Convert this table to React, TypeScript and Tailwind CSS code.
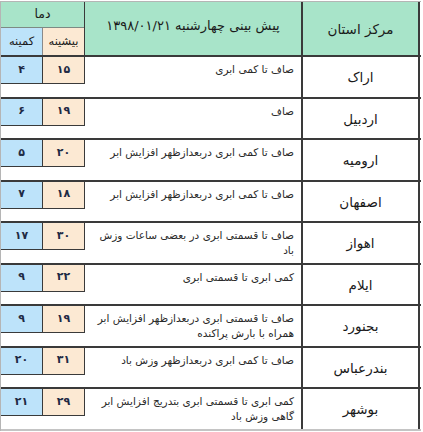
import React from "react";

type Row = { city: string; max: string; min: string; text: string };

const rows: Row[] = [
  { city: "اراک", max: "۱۵", min: "۴", text: "صاف تا کمی ابری" },
  { city: "اردبیل", max: "۱۹", min: "۶", text: "صاف" },
  { city: "ارومیه", max: "۲۰", min: "۵", text: "صاف تا کمی ابری دربعدازظهر افزایش ابر" },
  { city: "اصفهان", max: "۱۸", min: "۷", text: "صاف تا کمی ابری دربعدازظهر افزایش ابر" },
  { city: "اهواز", max: "۳۰", min: "۱۷", text: "صاف تا قسمتی ابری در بعضی ساعات وزش باد" },
  { city: "ایلام", max: "۲۲", min: "۹", text: "کمی ابری تا قسمتی ابری" },
  { city: "بجنورد", max: "۱۹", min: "۹", text: "صاف تا قسمتی ابری دربعدازظهر افزایش ابر همراه با بارش پراکنده" },
  { city: "بندرعباس", max: "۳۱", min: "۲۰", text: "صاف تا کمی ابری دربعدازظهر وزش باد" },
  { city: "بوشهر", max: "۲۹", min: "۲۱", text: "کمی ابری تا قسمتی ابری بتدریج افزایش ابر گاهی وزش باد" },
];

export default function App() {
  return (
    <div
      className="w-[423px] h-[432px] bg-white overflow-hidden text-[#1a1a1a]"
      style={{ fontFamily: '"DejaVu Sans", "Noto Sans", sans-serif' }}
    >
      <div className="w-[421px] border-t border-l border-[#b5b5b5] mt-px">
        {/* header */}
        <div className="flex h-[55px] border-b-2 border-[#3a3a3a]">
          <div className="w-[84px] flex flex-col border-r-[1.5px] border-[#3a3a3a]">
            <div dir="rtl" className="h-[26px] bg-[#a8e4c9] border-b border-[#7d8a84] flex items-center justify-center text-[12.5px]">
              دما
            </div>
            <div className="flex flex-1">
              <div dir="rtl" className="w-[42px] bg-[#bde3fa] border-r border-[#8a8a8a] flex items-center justify-center text-[11.5px]">
                کمینه
              </div>
              <div dir="rtl" className="flex-1 bg-[#fce9d3] flex items-center justify-center text-[11.5px]">
                بیشینه
              </div>
            </div>
          </div>
          <div dir="rtl" className="w-[218px] bg-[#a8e4c9] border-r-2 border-[#3a3a3a] flex items-center justify-center pb-[5px] text-[13px]">
            پیش بینی چهارشنبه ۱۳۹۸/۰۱/۲۱
          </div>
          <div dir="rtl" className="w-[117px] bg-[#a8e4c9] border-r-2 border-[#3a3a3a] flex items-center justify-center pt-[2px] text-[13.5px]">
            مرکز استان
          </div>
        </div>
        {/* rows */}
        {rows.map((r, i) => (
          <div
            key={i}
            className={
              "flex h-[41.5px] border-b-2 " +
              (i === rows.length - 1 ? "border-[#c4c4c4]" : "border-[#3a3a3a]")
            }
          >
            <div className="w-[302px] flex items-start border-r-2 border-[#3a3a3a]">
              <div className="flex h-[27px] w-[84px] border-b-[1.5px] border-r-[1.5px] border-[#3a3a3a] text-[11px] font-semibold text-[#1f2a44]">
                <div className="w-[42px] bg-[#bde3fa] border-r-[1.5px] border-[#3a3a3a] flex items-center justify-center">
                  {r.min}
                </div>
                <div className="flex-1 bg-[#fce9d3] flex items-center justify-center">
                  {r.max}
                </div>
              </div>
              <div dir="rtl" className="flex-1 text-right pr-[7px] pl-[10px] pt-[5px] text-[10.5px] leading-[15px] text-[#2a2a2a]">
                {r.text}
              </div>
            </div>
            <div dir="rtl" className="w-[117px] border-r-2 border-[#3a3a3a] flex items-center justify-center pt-[1px] text-[13.5px]">
              {r.city}
            </div>
          </div>
        ))}
      </div>
    </div>
  );
}
